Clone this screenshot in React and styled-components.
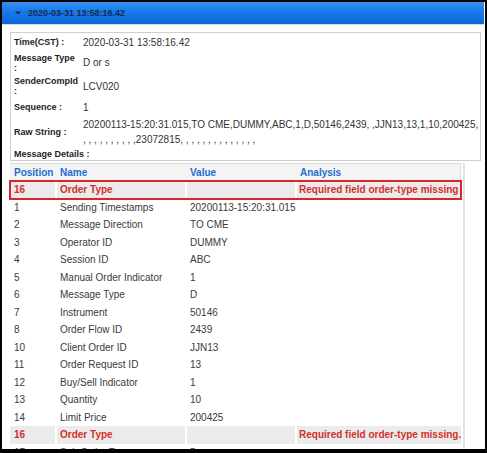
import React from 'react';
import styled, { createGlobalStyle } from 'styled-components';

const Global = createGlobalStyle`
  html, body { margin: 0; padding: 0; background: #fff; }
  body { font-family: "Liberation Sans", Arial, sans-serif; }
`;

const info = [
  { label: 'Time(CST) :', value: '2020-03-31 13:58:16.42', h: 18 },
  { label: 'Message Type :', value: 'D or s', h: 23 },
  { label: 'SenderCompId :', value: 'LCV020', h: 24 },
  { label: 'Sequence :', value: '1', h: 18 },
  {
    label: 'Raw String :',
    value: [
      '20200113-15:20:31.015,TO CME,DUMMY,ABC,1,D,50146,2439, ,JJN13,13,1,10,200425,',
      ', , , , , , , , , ,23072815, , , , , , , , , , , , , ,',
    ],
    h: 32,
  },
];

const rows = [
  ['1', 'Sending Timestamps', '20200113-15:20:31.015', ''],
  ['2', 'Message Direction', 'TO CME', ''],
  ['3', 'Operator ID', 'DUMMY', ''],
  ['4', 'Session ID', 'ABC', ''],
  ['5', 'Manual Order Indicator', '1', ''],
  ['6', 'Message Type', 'D', ''],
  ['7', 'Instrument', '50146', ''],
  ['8', 'Order Flow ID', '2439', ''],
  ['10', 'Client Order ID', 'JJN13', ''],
  ['11', 'Order Request ID', '13', ''],
  ['12', 'Buy/Sell Indicator', '1', ''],
  ['13', 'Quantity', '10', ''],
  ['14', 'Limit Price', '200425', ''],
  ['16', 'Order Type', '', 'Required field order-type missing.', 'error'],
  ['17', 'Sub Order Type', '5', ''],
];

export default function App() {
  return (
    <>
      <Global />
      <Frame>
        <Header>
          <svg width="6" height="4" viewBox="0 0 6 4">
            <path d="M0 0.5 H6 L3 3.5 Z" fill="#142a52" />
          </svg>
          <HeaderTitle>2020-03-31 13:58:16.42</HeaderTitle>
        </Header>
        <Body>
          <InfoBox>
            {info.map((r) => (
              <InfoRow key={r.label} $h={r.h}>
                <Label>{r.label}</Label>
                <Value>
                  {Array.isArray(r.value)
                    ? r.value.map((line, i) => <Line key={i}>{line}</Line>)
                    : r.value}
                </Value>
              </InfoRow>
            ))}
            <DetailsTitle>Message Details :</DetailsTitle>
          </InfoBox>
          <Scroller>
            <Table>
              <HeadRow>
                <HeadCell>Position</HeadCell>
                <HeadCell>Name</HeadCell>
                <HeadCell>Value</HeadCell>
                <HeadCell>Analysis</HeadCell>
              </HeadRow>
              <Row $error $boxed>
                <Cell $error>16</Cell>
                <Cell $error>Order Type</Cell>
                <Cell $error></Cell>
                <Cell $error>Required field order-type missing</Cell>
              </Row>
              {rows.map((r) => {
                const err = r[4] === 'error';
                return (
                  <Row key={r[0] + r[1]} $error={err}>
                    <Cell $error={err}>{r[0]}</Cell>
                    <Cell $error={err}>{r[1]}</Cell>
                    <Cell $error={err}>{r[2]}</Cell>
                    <Cell $error={err}>{r[3]}</Cell>
                  </Row>
                );
              })}
            </Table>
          </Scroller>
        </Body>
      </Frame>
    </>
  );
}

const Frame = styled.div`
  width: 487px;
  height: 453px;
  box-sizing: border-box;
  border-style: solid;
  border-color: #000;
  border-width: 2px 2px 4px 2px;
  overflow: hidden;
  background: #fff;
  display: flex;
  flex-direction: column;
`;

const Header = styled.div`
  height: 22px;
  flex-shrink: 0;
  margin-right: 1px;
  display: flex;
  align-items: center;
  gap: 7px;
  padding-left: 13px;
  background: linear-gradient(#3592f2, #1878e8 45%, #0b68da);
  border-bottom: 1px solid #d8d8d8;
`;

const HeaderTitle = styled.span`
  font-size: 9px;
  font-weight: bold;
  color: #132a55;
`;

const Body = styled.div`
  flex: 1;
  min-height: 0;
  display: flex;
  flex-direction: column;
  padding: 7px 0 0 8px;
`;

const InfoBox = styled.div`
  margin-right: 4px;
  border: 1px solid #cfcfcf;
  display: flex;
  flex-direction: column;
  flex-shrink: 0;
`;

const InfoRow = styled.div`
  display: grid;
  grid-template-columns: 72px 1fr;
  align-items: center;
  height: ${(p) => p.$h}px;
`;

const Label = styled.div`
  padding: 0 4px 0 3px;
  font-size: 9px;
  line-height: 10px;
  font-weight: bold;
  color: #1e1e1e;
`;

const Value = styled.div`
  font-size: 10px;
  line-height: 15px;
  color: #333;
`;

const Line = styled.div`
  white-space: nowrap;
`;

const DetailsTitle = styled.div`
  height: 12px;
  display: flex;
  align-items: center;
  padding-left: 3px;
  font-size: 9px;
  font-weight: bold;
  color: #1e1e1e;
`;

const Scroller = styled.div`
  flex: 1;
  min-height: 0;
  margin-top: 2px;
  width: 455px;
  box-sizing: border-box;
  padding-right: 2px;
  border-right: 2px solid #e2e2e2;
`;

const Table = styled.div`
  width: 451px;
  display: flex;
  flex-direction: column;
`;

const cols = '47px 130px 110px 164px';

const HeadRow = styled.div`
  display: grid;
  grid-template-columns: ${cols};
  height: 18px;
  box-sizing: border-box;
  align-items: center;
  background: #f4f4f4;
  border-top: 1px solid #dcdcdc;
  border-right: 1px solid #dcdcdc;
`;

const HeadCell = styled.div`
  padding-left: 3px;
  font-size: 10px;
  font-weight: bold;
  color: #1c6ed2;
  &:first-child { padding-left: 4px; }
`;

const Row = styled.div`
  display: grid;
  grid-template-columns: ${cols};
  height: 17.5px;
  flex-shrink: 0;
  font-size: 10px;
  color: ${(p) => (p.$error ? '#d3302c' : '#3a3a3a')};
  font-weight: ${(p) => (p.$error ? 'bold' : 'normal')};
  outline: ${(p) => (p.$boxed ? '2px solid #d7262b' : 'none')};
  outline-offset: -1px;
`;

const Cell = styled.div`
  display: flex;
  align-items: center;
  padding-left: 3px;
  white-space: nowrap;
  background: ${(p) => (p.$error ? '#ebebeb' : 'transparent')};
  box-shadow: ${(p) => (p.$error ? 'inset -2px 0 0 #fff' : 'none')};
  &:first-child { padding-left: 4px; }
  &:last-child { box-shadow: none; padding-left: 2px; }
`;
